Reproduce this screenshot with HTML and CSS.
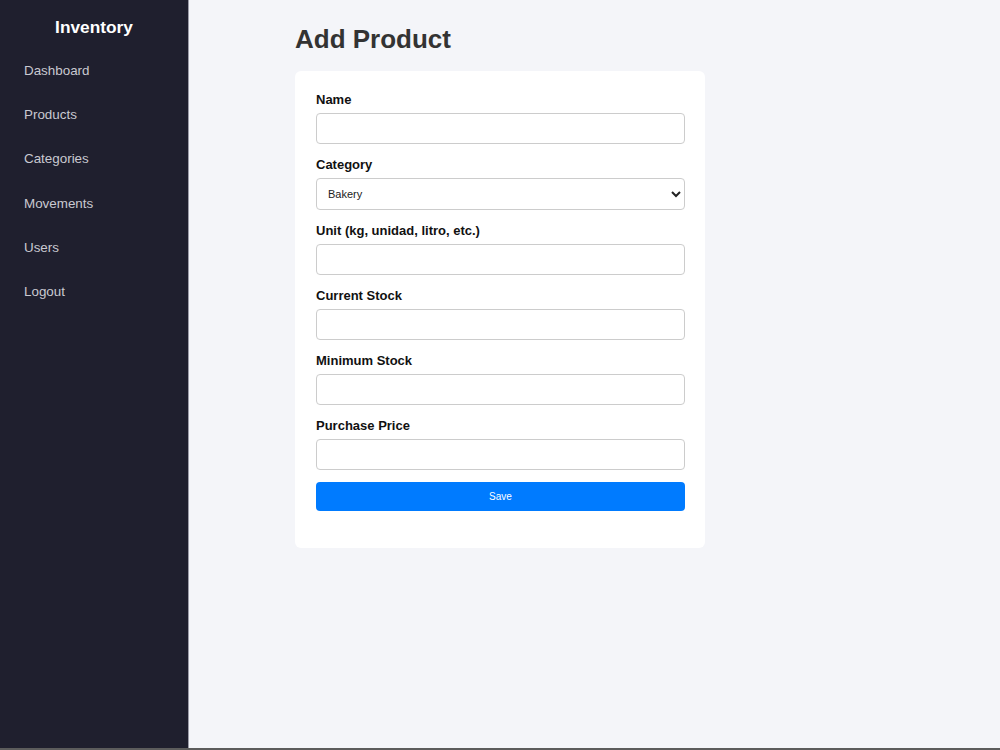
FILE: index.html
```html
<!DOCTYPE html>
<html lang="en">
<head>
  <meta charset="UTF-8" />
  <meta name="viewport" content="width=device-width, initial-scale=1.0" />
  <title>Add Product</title>
  <link rel="stylesheet" href="styles.css">
</head>
<body>
  <div class="layout">
    <nav class="sidebar">
      <h2>Inventory</h2>
      <a href="#">Dashboard</a>
      <a href="#">Products</a>
      <a href="#">Categories</a>
      <a href="#">Movements</a>
      <a href="#">Users</a>
      <a href="#">Logout</a>
    </nav>
    <main class="content">
      <h1>Add Product</h1>
      <form class="card">
        <label for="name">Name</label>
        <input type="text" id="name">

        <label for="category">Category</label>
        <select id="category">
          <option>Bakery</option>
          <option>Dairy</option>
          <option>Beverages</option>
        </select>

        <label for="unit">Unit (kg, unidad, litro, etc.)</label>
        <input type="text" id="unit">

        <label for="stock">Current Stock</label>
        <input type="number" id="stock">

        <label for="min">Minimum Stock</label>
        <input type="number" id="min">

        <label for="price">Purchase Price</label>
        <input type="number" id="price">

        <button type="submit">Save</button>
      </form>
    </main>
  </div>
</body>
</html>
```

FILE: styles.css
```css
html { background: #5c5c5c; }
body { font-family: 'Liberation Sans', Arial, sans-serif; margin: 0; padding: 0; }
.layout { display: flex; height: 748px; background: #f4f5f9; }
.sidebar { width: 188px; flex-shrink: 0; background: #1f1f2e; border-right: 1px solid #9c9ca8; display: flex; flex-direction: column; }
.sidebar h2 { color: white; font-size: 17.3px; text-align: center; margin: 17px 0 11px; line-height: 21px; }
.sidebar a { color: #c9c9d1; text-decoration: none; font-size: 13.4px; padding: 0 24px; line-height: 44.2px; }
.content { padding: 0 0 0 106px; }
.content h1 { color: #333; font-size: 26px; margin: 24px 0 17px; line-height: 30px; }
.card { background: white; width: 410px; box-sizing: border-box; padding: 20px 20px 37px 21px; border-radius: 6px; display: flex; flex-direction: column; }
.card label { font-weight: bold; font-size: 13px; line-height: 17px; margin-bottom: 5px; color: #111; }
.card input, .card select { height: 31px; box-sizing: border-box; border: 1px solid #ccc; border-radius: 4px; margin-bottom: 12px; padding: 4px 8px; font-family: inherit; font-size: 12px; background: white; }
.card select { height: 32px; padding: 4px 7px; font-size: 11px; color: #222; }
.card button { height: 29px; border: none; border-radius: 4px; background: #007bff; color: white; font-family: inherit; font-size: 10px; cursor: pointer; }
```
